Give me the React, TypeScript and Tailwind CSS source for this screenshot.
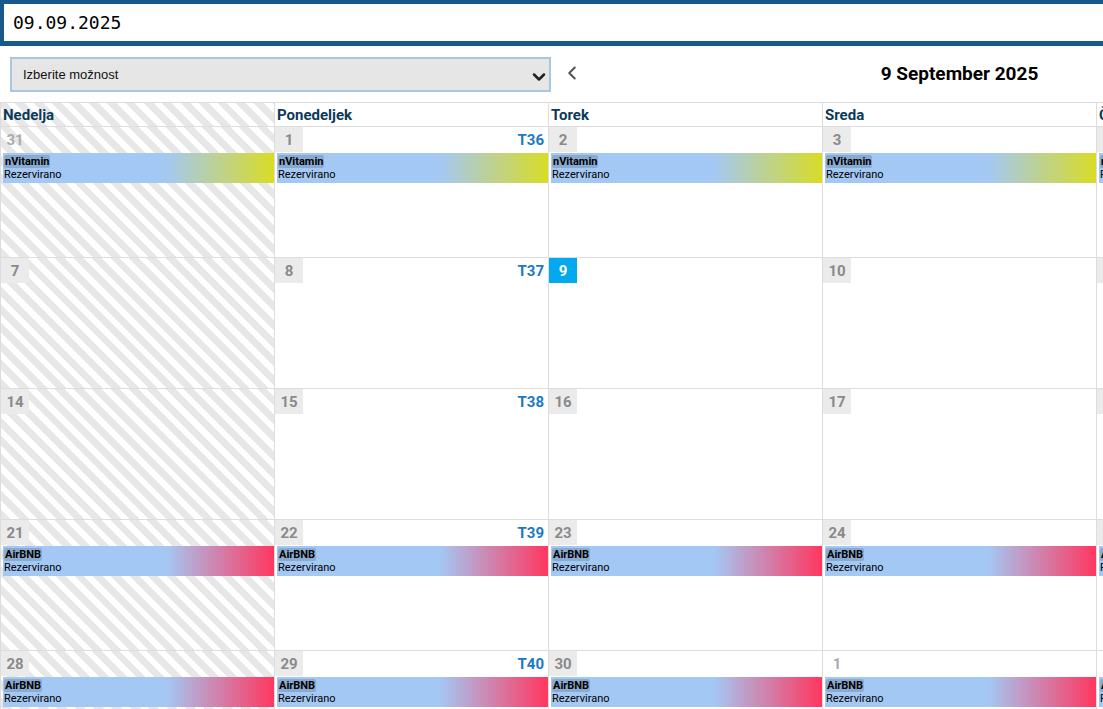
import { ChevronDown, ChevronLeft } from "lucide-react";

const dayNames = ["Nedelja", "Ponedeljek", "Torek", "Sreda", "Četrtek", "Petek", "Sobota"];

type Ev = "nVitamin" | "AirBNB" | null;

const weeks: { week: string; days: number[]; event: Ev }[] = [
  { week: "T36", days: [31, 1, 2, 3, 4, 5, 6], event: "nVitamin" },
  { week: "T37", days: [7, 8, 9, 10, 11, 12, 13], event: null },
  { week: "T38", days: [14, 15, 16, 17, 18, 19, 20], event: null },
  { week: "T39", days: [21, 22, 23, 24, 25, 26, 27], event: "AirBNB" },
  { week: "T40", days: [28, 29, 30, 1, 2, 3, 4], event: "AirBNB" },
];

const hatch =
  "bg-[image:repeating-linear-gradient(45deg,#e7e7e7_0px,#e7e7e7_7px,#ffffff_7px,#ffffff_13px)]";

function EventBar({ name }: { name: "nVitamin" | "AirBNB" }) {
  const grad =
    name === "nVitamin"
      ? "bg-[image:linear-gradient(to_right,#a4c8f4_60%,#d8dc26_100%)]"
      : "bg-[image:linear-gradient(to_right,#a4c8f4_60%,#ff3760_100%)]";
  return (
    <div className={`ml-[2px] mt-[1px] h-[30px] pl-[1px] pt-[2px] text-[11px] leading-[13px] text-black ${grad}`}>
      <div>
        <span className="rounded-[2px] bg-black/15 px-[1px] font-bold">{name}</span>
      </div>
      <div>Rezervirano</div>
    </div>
  );
}

export default function App() {
  return (
    <div className="w-screen overflow-hidden bg-white font-['Roboto',sans-serif]">
      <div className="w-[1919px]">
        <div className="flex h-[46px] items-center border-b-[5px] border-l-4 border-t-4 border-[#17598b] pl-[9px] font-['DejaVu_Sans_Mono',monospace] text-[18px] text-black">
          09.09.2025
        </div>

        <div className="mt-[11px] grid h-[35px] grid-cols-[1fr_auto_1fr] items-center">
          <div className="flex items-center pl-[10px]">
            <div className="flex h-[35px] w-[541px] items-center justify-between border-2 border-[#a9c6e0] bg-[#e6e6e6] pl-[11px] pr-0 font-['Liberation_Sans',Arial,sans-serif] text-[13px] text-[#111]">
              <span>Izberite možnost</span>
              <ChevronDown size={20} strokeWidth={3} className="mt-[5px] text-[#222]" />
            </div>
            <ChevronLeft size={22} strokeWidth={2.2} className="mb-[4px] ml-[10px] text-[#555]" />
          </div>
          <div className="text-[19px] font-bold text-black">9 September 2025</div>
          <div />
        </div>

        <div className="mt-[10px] border-l border-t border-[#dddddd]">
          <div className="grid grid-cols-[repeat(7,274px)]">
            {dayNames.map((d, i) => (
              <div
                key={d}
                className={`flex h-[24px] items-center border-b border-r border-[#dddddd] pl-[2px] pt-[2px] text-[15px] font-bold text-[#0c3a58] ${i === 0 ? hatch : ""}`}
              >
                {d}
              </div>
            ))}
          </div>

          {weeks.map((w, wi) => (
            <div key={w.week} className="grid grid-cols-[repeat(7,274px)]">
              {w.days.map((d, di) => {
                const out = (wi === 0 && di === 0) || (wi === 4 && di >= 3);
                const today = wi === 1 && d === 9;
                return (
                  <div
                    key={di}
                    className={`h-[131px] border-b border-r border-[#dddddd] ${di === 0 ? hatch : ""}`}
                  >
                    <div className="flex h-[25px] items-center justify-between">
                      <div
                        className={`flex h-[25px] w-[28px] items-center justify-center pt-[2px] text-[15px] font-bold ${
                          out
                            ? "text-[#ababab]"
                            : today
                            ? "bg-[#03a9ee] text-white"
                            : "bg-[#ebebeb] text-[#8a8a8a]"
                        }`}
                      >
                        {d}
                      </div>
                      {di === 1 && (
                        <span className="pr-[4px] pt-[2px] text-[15px] font-bold text-[#1c79c2]">{w.week}</span>
                      )}
                    </div>
                    {w.event && <EventBar name={w.event} />}
                  </div>
                );
              })}
            </div>
          ))}
        </div>
      </div>
    </div>
  );
}
